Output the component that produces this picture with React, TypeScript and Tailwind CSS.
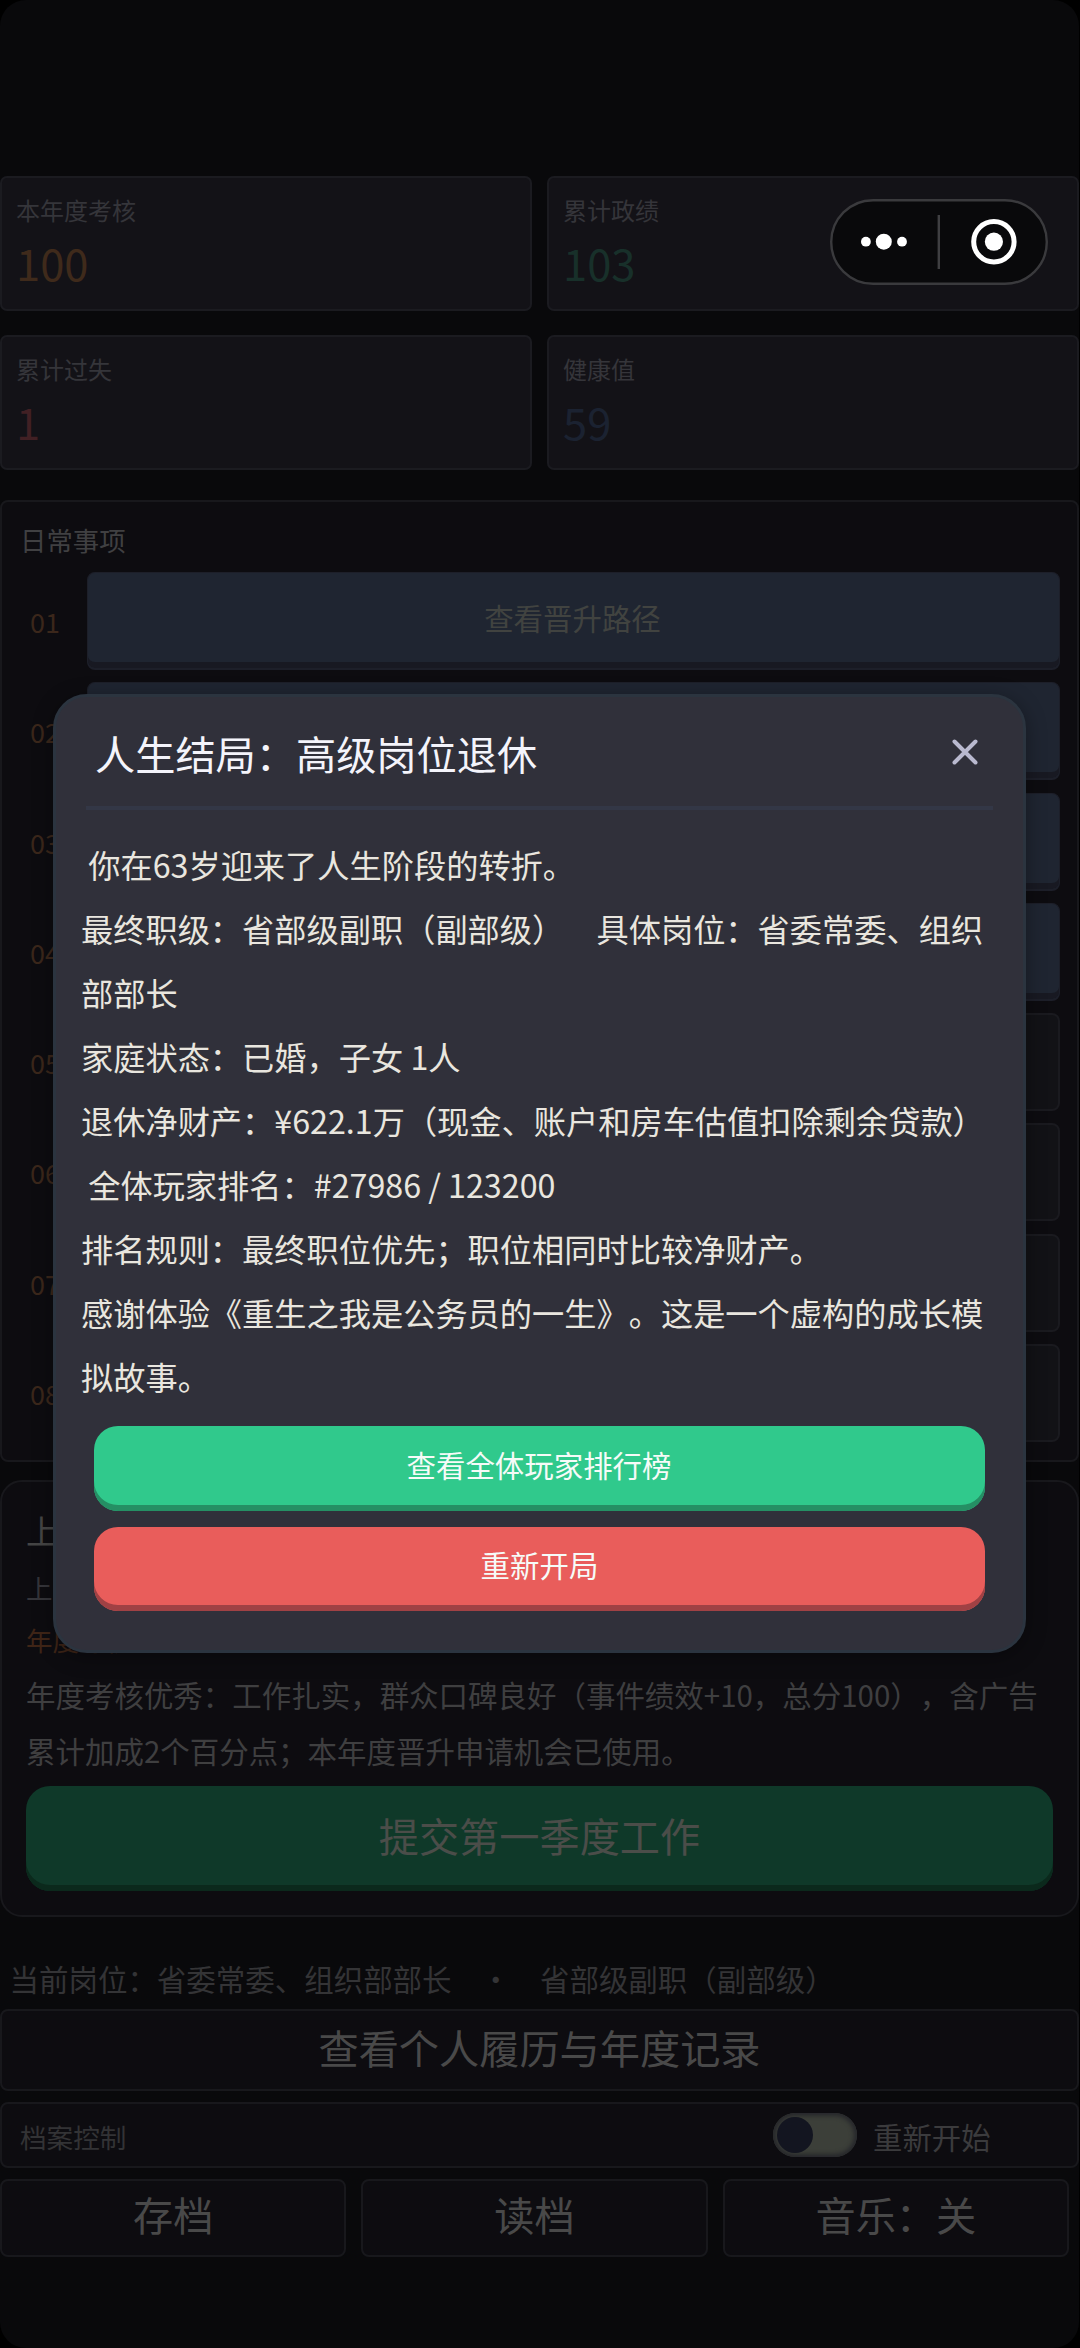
import React from "react";

const FONT =
  "font-['Noto_Sans_CJK_SC',sans-serif] [text-spacing-trim:space-all] [font-kerning:none]";

function Stat({ label, value, color }: { label: string; value: string; color: string }) {
  return (
    <div className="h-[135px] rounded-[7px] border-2 border-[#1b1b20] bg-[#131217] pl-[14px] pt-[16px] whitespace-nowrap">
      <div className="text-[24px] leading-[32px] text-[#35353a]">{label}</div>
      <div className={`mt-[11px] text-[43.5px] leading-[52px] ${color}`}>{value}</div>
    </div>
  );
}

function DailyRow({ index, label, primary }: { index: string; label?: string; primary: boolean }) {
  return (
    <div className="flex h-[98px]">
      <div className="w-[85px] shrink-0 pl-[28px] pt-[30px] text-[27px] leading-[40px] text-[#3b271b]">{index}</div>
      <div
        className={
          primary
            ? "flex h-[98px] w-[973px] justify-center rounded-[8px] border-x border-t border-[#1d1f29] border-b-[2px] bg-[#1f2531] pt-[22px] pr-[2px] text-[29.45px] leading-[44px] text-[#414340] shadow-[inset_0_-6px_0_#181922]"
            : "h-[98px] w-[973px] rounded-[8px] border-2 border-[#1a1a1f] bg-[#121216]"
        }
      >
        {label}
      </div>
    </div>
  );
}

function Capsule() {
  return (
    <svg className="absolute left-[829px] top-[198px]" width="220" height="88" viewBox="0 0 220 88">
      <rect x="2.2" y="2.2" width="215.6" height="83.6" rx="41.8" fill="#09090b" stroke="#3a3a3d" strokeWidth="2.4" />
      <path d="M109.8 17v54" stroke="#3f3f42" strokeWidth="2.4" />
      <g fill="#fff">
        <circle cx="36.9" cy="43.7" r="4.9" />
        <circle cx="54.8" cy="43.7" r="8" />
        <circle cx="73" cy="43.7" r="4.9" />
        <circle cx="164.9" cy="43.7" r="9.1" />
      </g>
      <circle cx="164.9" cy="43.7" r="20.2" fill="none" stroke="#fff" strokeWidth="5" />
    </svg>
  );
}

function EndingDialog() {
  return (
    <div className="absolute left-[53px] top-[694px] h-[959px] w-[973px] rounded-[34px] border-[3px] border-[#2b343f] bg-[#30303a] shadow-[0_4px_20px_rgba(0,0,0,0.35)] whitespace-nowrap">
      <div className="mx-[30px] flex h-[113px] items-start justify-between border-b-4 border-[#333746] pl-[9px] pr-[15px]">
        <h1 className="pt-[28px] text-[40.2px] leading-[56px] text-[#f4f4fb]">人生结局：高级岗位退休</h1>
        <svg className="mt-[42px]" width="26" height="26" viewBox="0 0 26 26" stroke="#b9b9cf" strokeWidth="4" strokeLinecap="round">
          <path d="M2.5 2.5l21 21M23.5 2.5l-21 21" />
        </svg>
      </div>
      <div className="ml-[25px] mt-[21.5px] h-[594.5px] whitespace-pre text-[32.22px] leading-[64.1px] text-[#e9e6df]">
        <div> 你在63岁迎来了人生阶段的转折。</div>
        <div>最终职级：省部级副职（副部级）　具体岗位：省委常委、组织</div>
        <div>部部长</div>
        <div>家庭状态：已婚，子女 1人</div>
        <div>退休净财产：¥622.1万（现金、账户和房车估值扣除剩余贷款）</div>
        <div> 全体玩家排名：#27986 / 123200</div>
        <div>排名规则：最终职位优先；职位相同时比较净财产。</div>
        <div>感谢体验《重生之我是公务员的一生》。这是一个虚构的成长模</div>
        <div>拟故事。</div>
      </div>
      <div className="mx-[38px] flex flex-col gap-[16px] text-center text-[29.45px] leading-[44px] text-[#f6fbf8]">
        <div className="h-[84.5px] rounded-[24px] bg-[#30c98c] pt-[16px] pr-[1px] shadow-[inset_0_-6px_0_#258f64]">查看全体玩家排行榜</div>
        <div className="h-[84.5px] rounded-[24px] bg-[#e95d5b] pt-[15px] shadow-[inset_0_-6px_0_#a04144]">重新开局</div>
      </div>
    </div>
  );
}

const rows = [
  { index: "01", label: "查看晋升路径", primary: true },
  { index: "02", primary: true },
  { index: "03", primary: true },
  { index: "04", primary: true },
  { index: "05", primary: false },
  { index: "06", primary: false },
  { index: "07", primary: false },
  { index: "08", primary: false },
];

export default function App() {
  return (
    <div className="h-[2348px] w-[1080px] bg-black">
      <div className={`relative h-[2348px] w-[1079px] overflow-hidden rounded-[26px] bg-[#09090b] pt-[176px] ${FONT}`}>
        <div className="grid grid-cols-2 gap-x-[15px] gap-y-[24px]">
          <Stat label="本年度考核" value="100" color="text-[#3f2a1b]" />
          <Stat label="累计政绩" value="103" color="text-[#18302a]" />
          <Stat label="累计过失" value="1" color="text-[#412024]" />
          <Stat label="健康值" value="59" color="text-[#1b2231]" />
        </div>

        <div className="mt-[30px] h-[962px] rounded-[8px] border-2 border-[#18181c] bg-[#0d0c10]">
          <div className="pl-[18px] pt-[18px] text-[26.4px] leading-[40px] text-[#404042]">日常事项</div>
          <div className="mt-[12px] flex flex-col gap-[12.3px]">
            {rows.map((r) => (
              <DailyRow key={r.index} {...r} />
            ))}
          </div>
        </div>

        <div className="mt-[18px] h-[437px] rounded-[22px] border-2 border-[#18181c] bg-[#0d0c10] px-[24px] whitespace-nowrap">
          <div className="pt-[24px] text-[33px] leading-[48px] text-[#454545]">上季度工作</div>
          <div className="mt-[14px] text-[26.5px] leading-[40px] text-[#35353a]">上季度</div>
          <div className="mt-[12px] flex text-[26.5px] leading-[40px] text-[#3f2517]">
            <span className="w-[248px]">年度考核</span>
            <span className="text-[24px]">事件绩效</span>
          </div>
          <div className="mt-[6px] text-[29.47px] leading-[56.4px] text-[#3f3f40]">
            <div>年度考核优秀：工作扎实，群众口碑良好（事件绩效+10，总分100），含广告</div>
            <div>累计加成2个百分点；本年度晋升申请机会已使用。</div>
          </div>
          <div className="mt-[7px] h-[105px] w-[1027px] rounded-[24px] bg-[#0f3929] pt-[21px] text-center text-[40.2px] leading-[56px] text-[#4b4d49] shadow-[inset_0_-6px_0_#0b291c]">
            提交第一季度工作
          </div>
        </div>

        <div className="mt-[41px] whitespace-pre pl-[9.5px] text-[29.47px] leading-[40px] text-[#343436]">当前岗位：省委常委、组织部部长　・　省部级副职（副部级）</div>

        <div className="mt-[11px] h-[82px] rounded-[8px] border-2 border-[#18181c] bg-[#0d0c10] pt-[8px] text-center text-[40.2px] leading-[56px] text-[#494949]">
          查看个人履历与年度记录
        </div>

        <div className="mt-[11px] flex h-[66px] items-center rounded-[8px] border-2 border-[#18181c] bg-[#0d0c10] pl-[18px]">
          <span className="w-[753px] pt-[3px] text-[26.6px] leading-[40px] text-[#333335]">档案控制</span>
          <div className="flex h-[44px] w-[84px] items-center rounded-full bg-[#3c3f39] pl-[4px] shadow-[inset_0_0_4px_3px_#26272b]">
            <div className="size-[36px] rounded-full bg-[#131520]" />
          </div>
          <span className="pl-[16px] pt-[2px] text-[29.4px] leading-[40px] text-[#3b3b3d]">重新开始</span>
        </div>

        <div className="mt-[11px] grid w-[1069px] grid-cols-3 gap-[15px] text-center text-[40.2px] leading-[56px] text-[#494949]">
          {["存档", "读档", "音乐：关"].map((t) => (
            <div key={t} className="h-[77.5px] rounded-[8px] border-2 border-[#18181c] bg-[#0d0c10] pt-[5px]">
              {t}
            </div>
          ))}
        </div>

        <EndingDialog />
        <Capsule />
      </div>
    </div>
  );
}
